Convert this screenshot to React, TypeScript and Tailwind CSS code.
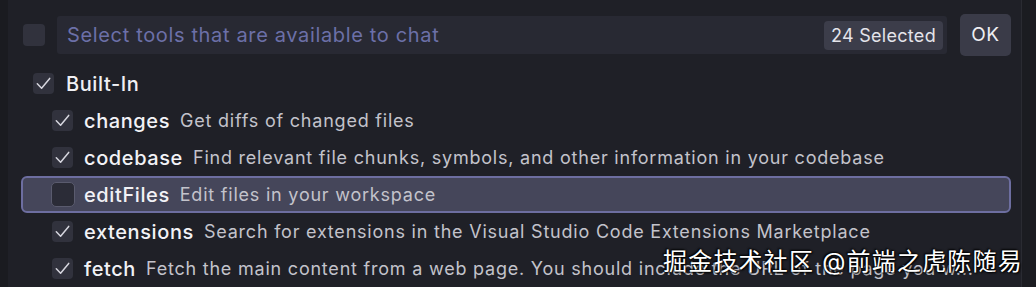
const tools = [
  { name: "changes", desc: "Get diffs of changed files", checked: true },
  {
    name: "codebase",
    desc: "Find relevant file chunks, symbols, and other information in your codebase",
    checked: true,
  },
  { name: "editFiles", desc: "Edit files in your workspace", checked: false, active: true },
  {
    name: "extensions",
    desc: "Search for extensions in the Visual Studio Code Extensions Marketplace",
    checked: true,
  },
  {
    name: "fetch",
    desc: "Fetch the main content from a web page. You should include the URL of the page you w...",
    checked: true,
  },
];

function Check({ checked, big }: { checked: boolean; big?: boolean }) {
  return (
    <div
      className={
        big
          ? "w-[24px] h-[25px] shrink-0 rounded-[5px] bg-[#2b2c37] border border-[#5a5b6e] flex items-center justify-center"
          : "w-[21px] h-[21px] shrink-0 rounded-[4px] bg-[#31323d] flex items-center justify-center"
      }
    >
      {checked && (
        <svg width="17" height="17" viewBox="0 0 17 17" fill="none">
          <path
            d="M2.3 8.8 L6.6 13.2 L14.7 3.4"
            stroke="#d6d6de"
            strokeWidth="1.5"
            strokeLinecap="round"
            strokeLinejoin="round"
          />
        </svg>
      )}
    </div>
  );
}

export default function App() {
  return (
    <div className="w-[1036px] h-[287px] bg-[#18191e] flex overflow-hidden relative font-['Inter','Noto_Sans_CJK_SC',sans-serif]">
      <div className="w-[8px] shrink-0 bg-[#1a1b20]" />
      <div className="w-[1014px] shrink-0 bg-[#1f2027] border-r border-[#2a2b32]">
        <div className="flex items-center pt-[14px] pl-[15px] pr-[10px]">
          <div className="w-[22px] h-[22px] rounded-[4px] bg-[#31323d] shrink-0" />
          <div className="ml-[12px] flex-1 h-[38px] bg-[#282933] rounded-[3px] flex items-center pl-[10px] pr-[4px]">
            <span className="flex-1 text-[20px] text-[#6c70a8] tracking-[0.65px]">
              Select tools that are available to chat
            </span>
            <span className="h-[29px] px-[7px] rounded-[4px] bg-[#3c3d4a] text-[#e4e4ea] text-[18px] tracking-[0.3px] flex items-center">
              24 Selected
            </span>
          </div>
          <button className="ml-[13px] w-[51px] h-[42px] rounded-[5px] bg-[#3a3b48] text-[#eeeef2] text-[19px] tracking-[0.5px] flex items-center justify-center">
            OK
          </button>
        </div>

        <div className="mt-[9px] ml-[13px] mr-[10px] h-[37px] flex items-center pl-[12px]">
          <Check checked />
          <span className="ml-[12px] text-[20px] tracking-[0.6px] text-[#f0f0f4] font-medium">Built-In</span>
        </div>

        {tools.map((t) => (
          <div
            key={t.name}
            className={
              t.active
                ? "ml-[13px] mr-[10px] h-[37px] flex items-center pl-[28px] rounded-[6px] bg-[#45465a] border-2 border-[#6d6ea0]"
                : "ml-[13px] mr-[10px] h-[37px] flex items-center pl-[31px]"
            }
          >
            <Check checked={t.checked} big={t.active} />
            <span
              className={
                t.active
                  ? "ml-[9px] text-[20px] tracking-[0.6px] font-medium text-[#f2f2f6]"
                  : "ml-[11px] text-[20px] tracking-[0.6px] font-medium text-[#f2f2f6]"
              }
            >
              {t.name}
            </span>
            <span className="ml-[10px] text-[18px] tracking-[0.78px] text-[#c3c3cb] whitespace-nowrap">
              {t.desc}
            </span>
          </div>
        ))}
      </div>
      <div className="flex-1 bg-[#1b1c21]" />

      <div className="absolute left-[663px] top-[244px] text-[24px] text-white tracking-[1.2px] [text-shadow:0_0_2px_#000,1px_1px_2px_#000,-1px_-1px_2px_#000]">
        掘金技术社区 @前端之虎陈随易
      </div>
    </div>
  );
}
